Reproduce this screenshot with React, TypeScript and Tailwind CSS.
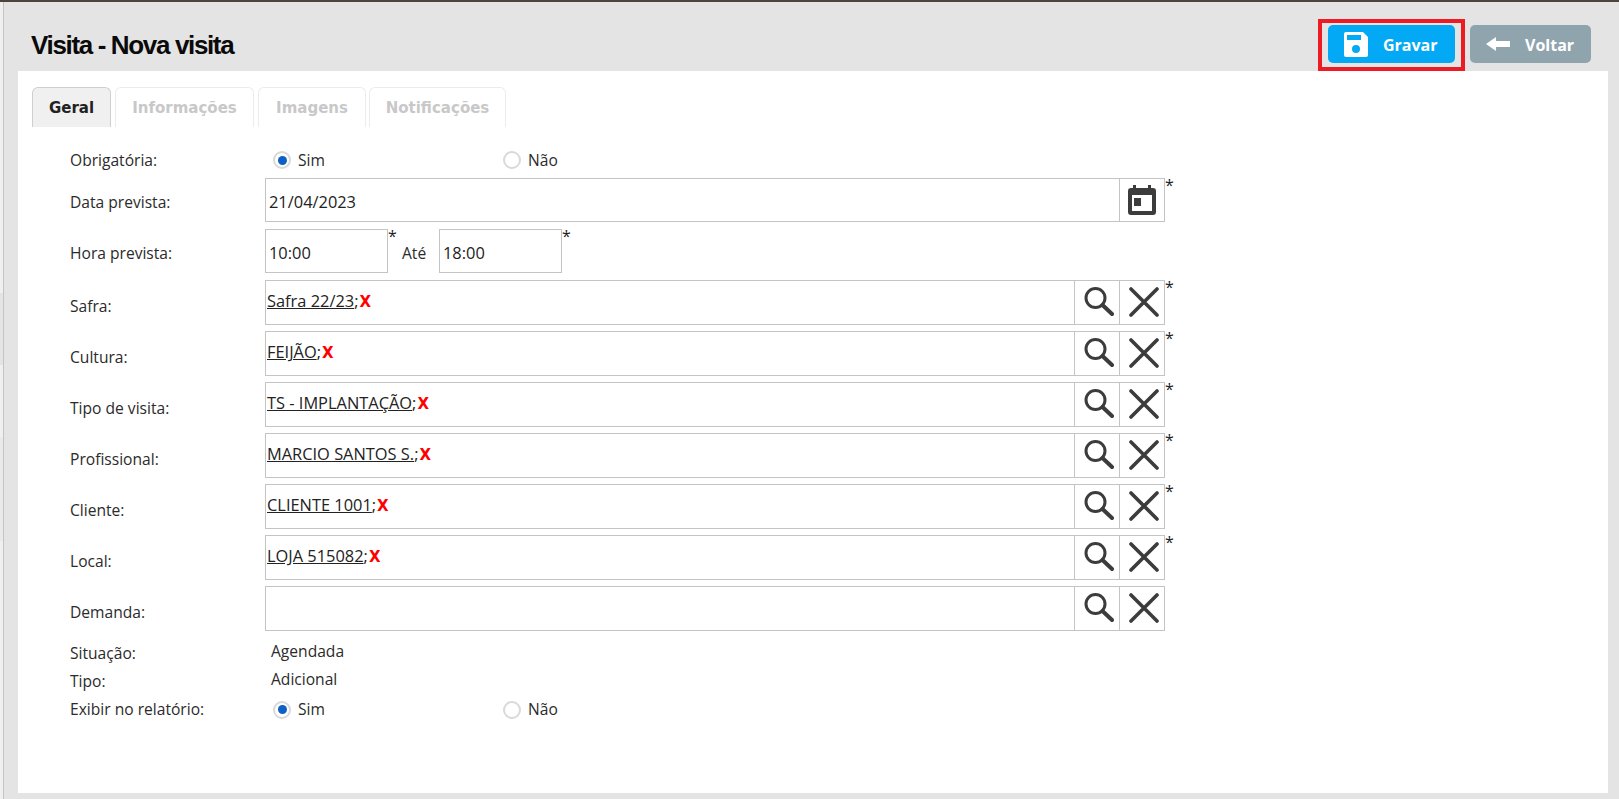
import React from 'react';

const FONT = "font-['Open_Sans','Liberation_Sans',sans-serif]";

const SearchIcon = () => (
  <svg width="34" height="34" viewBox="0 0 34 34" fill="none" stroke="#3c3c3c" strokeLinecap="round">
    <circle cx="15.500" cy="12" r="9.500" strokeWidth="3" />
    <path d="M22.500 19l9.500 9" strokeWidth="4" />
  </svg>
);

const CloseIcon = () => (
  <svg width="34" height="34" viewBox="0 0 34 34" fill="none" stroke="#3c3c3c" strokeWidth="3.600" strokeLinecap="round">
    <path d="M6 3l26 26M32 3L6 29" />
  </svg>
);

const CalendarIcon = () => (
  <svg width="28" height="30" viewBox="0 0 28 30" className="ml-[-1px]">
    <path
      fillRule="evenodd"
      fill="#3c3c3c"
      d="M5 0h3v3h12V0h3v3h2a3 3 0 0 1 3 3v21a3 3 0 0 1-3 3H3a3 3 0 0 1-3-3V6a3 3 0 0 1 3-3h2V0zM4 10v16h20V10H4z"
    />
    <rect x="6" y="13" width="7" height="8" fill="#3c3c3c" />
  </svg>
);

const Asterisk = () => <span className="w-3 self-start text-[16px] leading-[15px] text-[#222]">*</span>;

const Radio = ({ label, checked }: { label: string; checked?: boolean }) => (
  <span className="flex items-center gap-[7px]">
    <span className="flex h-[18px] w-[18px] items-center justify-center rounded-full border-2 border-[#d9d9d9] bg-white">
      {checked && <span className="h-[9px] w-[9px] rounded-full bg-[#0b62c4]" />}
    </span>
    <span>{label}</span>
  </span>
);

const YesNo = () => (
  <div className="flex pl-[8px]">
    <div className="w-[230px]">
      <Radio label="Sim" checked />
    </div>
    <Radio label="Não" />
  </div>
);

const IconCell = ({ children }: { children: React.ReactNode }) => (
  <div className="flex w-[45px] shrink-0 items-center justify-center border-l border-[#c4c4c4]">{children}</div>
);

const LookupRow = ({ label, value, required = true }: { label: string; value?: string; required?: boolean }) => (
  <div className="flex h-[45px]">
    <div className="flex w-[195px] items-center pt-[8px]">{label}</div>
    <div className="flex h-[45px] w-[900px] border border-[#c4c4c4]">
      <div className="flex-1 pl-[1px] pt-[8px] text-[16.400px] leading-[24px] text-[#222]">
        {value && (
          <>
            <span className="underline">{value}</span>;<span className="ml-[1px] font-['DejaVu_Sans'] text-[15px] font-bold text-[#ff0000]">X</span>
          </>
        )}
      </div>
      <IconCell>
        <SearchIcon />
      </IconCell>
      <IconCell>
        <CloseIcon />
      </IconCell>
    </div>
    {required && <Asterisk />}
  </div>
);

const tabs = [
  { label: 'Informações', className: 'w-[139px]' },
  { label: 'Imagens', className: 'w-[108px]' },
  { label: 'Notificações', className: 'ml-[-1px] w-[137px]' },
];
const lookups = [
  { label: 'Safra:', value: 'Safra 22/23' },
  { label: 'Cultura:', value: 'FEIJÃO' },
  { label: 'Tipo de visita:', value: 'TS - IMPLANTAÇÃO' },
  { label: 'Profissional:', value: 'MARCIO SANTOS S.' },
  { label: 'Cliente:', value: 'CLIENTE 1001' },
  { label: 'Local:', value: 'LOJA 515082' },
];

export default function App() {
  return (
    <div className={`${FONT} flex h-[799px] flex-col overflow-hidden border-t-2 border-[#4a4541] bg-[#e4e4e4] text-[15.600px] text-[#2b2b2b]`}>
      <div className="flex min-h-0 flex-1">
        {/* sliver of the page behind the window */}
        <div className="flex w-[3px] shrink-0 flex-col bg-[#f0f0f0]">
          <div className="mt-[291px] h-[72px] bg-[#e4e4e4]" />
          <div className="mt-[72px] h-[104px] bg-[#e9e9e9]" />
        </div>
        <div className="flex min-w-0 flex-1 flex-col border-l border-[#c4c4c4]">
          <div className="flex h-[69px] shrink-0 items-end">
            <h1 className="mb-[10px] ml-[27px] font-['Liberation_Sans'] text-[26px] leading-[32px] font-bold tracking-[-1.350px] text-[#0a0a0a]">
              Visita - Nova visita
            </h1>
            <div className="ml-auto mr-[28px] flex items-start">
              <div className="border-[4px] border-[#ed1c24] px-[6px] pt-[2px] pb-[4px]">
                <button className="flex h-[38px] w-[127px] items-center rounded-[5px] bg-[#03a9f4] pl-[16px] text-[16px] font-bold text-white">
                  <svg width="24" height="25" viewBox="0 0 24 25">
                    <path
                      fill="#fff"
                      fillRule="evenodd"
                      d="M2 0h17l5 5v18a2 2 0 0 1-2 2H2a2 2 0 0 1-2-2V2a2 2 0 0 1 2-2zM3 3v5h14V3H3zM8 17a4 4 0 1 0 8 0a4 4 0 1 0-8 0z"
                    />
                  </svg>
                  <span className="ml-[15px] pt-[1px]">Gravar</span>
                </button>
              </div>
              <button className="ml-[5px] mt-[6px] flex h-[38px] w-[121px] items-center rounded-[5px] bg-[#90a4ae] pl-[16px] text-[16px] font-bold text-white">
                <svg width="24" height="14" viewBox="0 0 24 14">
                  <path fill="#fff" d="M0 7l10-7v4h14v6H10v4z" />
                </svg>
                <span className="ml-[15px] pt-[1px]">Voltar</span>
              </button>
            </div>
          </div>
          <div className="mb-[6px] ml-[14px] mr-[11px] flex-1 bg-white pt-[16px]">
            <div className="ml-[14px] flex h-[40px] gap-[4px] font-['DejaVu_Sans'] text-[15px] font-bold">
              <div className="flex w-[79px] items-center justify-center rounded-t-[6px] border border-b-0 border-[#cfcfcf] bg-[#f0f0f0] pt-[1px] text-[#222]">
                Geral
              </div>
              {tabs.map((tab) => (
                <div
                  key={tab.label}
                  className={`${tab.className} flex items-center justify-center rounded-t-[6px] border border-b-0 border-[#ececec] pt-[1px] text-[#c8c8c8]`}
                >
                  {tab.label}
                </div>
              ))}
            </div>
            <div className="ml-[52px] mt-[9px] flex flex-col">
              <div className="flex h-[42px] items-start">
                <div className="w-[195px] pt-[12px] leading-[24px]">Obrigatória:</div>
                <div className="pt-[12px] leading-[24px]">
                  <YesNo />
                </div>
              </div>
              <div className="flex h-[44px]">
                <div className="flex w-[195px] items-center pt-[6px]">Data prevista:</div>
                <div className="flex h-[44px] w-[900px] border border-[#c4c4c4]">
                  <div className="flex flex-1 items-center pl-[3px] pt-[5px] text-[16.400px] text-[#222]">21/04/2023</div>
                  <IconCell>
                    <CalendarIcon />
                  </IconCell>
                </div>
                <Asterisk />
              </div>
              <div className="mt-[7px] flex h-[44px]">
                <div className="flex w-[195px] items-center pt-[6px]">Hora prevista:</div>
                <div className="flex w-[123px] items-center border border-[#c4c4c4] pl-[3px] pt-[5px] text-[16.400px] text-[#222]">10:00</div>
                <Asterisk />
                <div className="flex w-[39px] items-center pl-[2px] pt-[6px]">Até</div>
                <div className="flex w-[123px] items-center border border-[#c4c4c4] pl-[3px] pt-[5px] text-[16.400px] text-[#222]">18:00</div>
                <Asterisk />
              </div>
              <div className="mt-[7px] flex flex-col gap-[6px]">
                {lookups.map((row) => (
                  <LookupRow key={row.label} label={row.label} value={row.value} />
                ))}
                <LookupRow label="Demanda:" required={false} />
              </div>
              <div className="mt-[7px] flex h-[27px] items-center">
                <div className="w-[201px] pt-[4px]">Situação:</div>
                <div>Agendada</div>
              </div>
              <div className="mt-[1px] flex h-[28px] items-center">
                <div className="w-[201px] pt-[4px]">Tipo:</div>
                <div>Adicional</div>
              </div>
              <div className="mt-[2px] flex h-[28px] items-center">
                <div className="w-[195px]">Exibir no relatório:</div>
                <YesNo />
              </div>
            </div>
          </div>
        </div>
      </div>
    </div>
  );
}
